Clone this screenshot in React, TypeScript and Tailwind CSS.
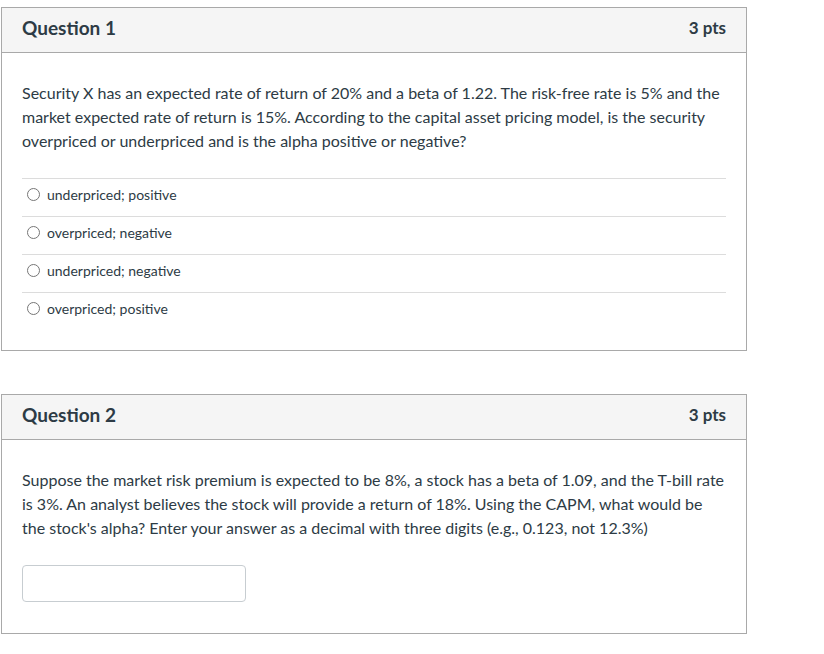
import React from 'react'

const options = [
  'underpriced; positive',
  'overpriced; negative',
  'underpriced; negative',
  'overpriced; positive',
]

const QuestionHeader = ({ title, pts }: { title: string; pts: string }) => (
  <div className="flex h-[45px] items-center justify-between border-b border-[#a9a9a9] bg-[#f5f5f5] px-5 pb-1">
    <span className="text-[19px] font-bold text-[#2d3b45]">{title}</span>
    <span className="text-[17px] font-bold text-[#2d3b45]">{pts}</span>
  </div>
)

export default function App() {
  return (
    <div
      className="min-h-screen bg-white pl-px pt-[7px] text-[#2d3b45]"
      style={{ fontFamily: 'Lato, "Noto Sans", sans-serif' }}
    >
      <div className="w-[746px] border border-[#a9a9a9]">
        <QuestionHeader title="Question 1" pts="3 pts" />
        <div className="px-5 pb-5 pt-[28px]">
          <p className="text-[16px] leading-[24px]">
            Security X has an expected rate of return of 20% and a beta of 1.22. The risk-free rate is 5% and the
            market expected rate of return is 15%. According to the capital asset pricing model, is the security
            overpriced or underpriced and is the alpha positive or negative?
          </p>
          <div className="mt-[25px]">
            {options.map((o) => (
              <label key={o} className="flex h-[38px] items-center border-t border-[#dcdcdc] pb-[7px]">
                <span className="ml-[5px] mr-[7px] h-[13px] w-[13px] rounded-full border border-[#767676] bg-white" />
                <span className="text-[14px]">{o}</span>
              </label>
            ))}
          </div>
        </div>
      </div>

      <div className="mt-[43px] w-[746px] border border-[#a9a9a9]">
        <QuestionHeader title="Question 2" pts="3 pts" />
        <div className="px-5 pb-[31px] pt-[28px]">
          <p className="text-[16px] leading-[24px]">
            Suppose the market risk premium is expected to be 8%, a stock has a beta of 1.09, and the T-bill rate
            is 3%. An analyst believes the stock will provide a return of 18%. Using the CAPM, what would be
            the stock's alpha? Enter your answer as a decimal with three digits (e.g., 0.123, not 12.3%)
          </p>
          <input
            type="text"
            className="mt-[25px] block h-[37px] w-[224px] rounded-[4px] border border-[#c7cdd1] bg-white px-2 outline-none"
          />
        </div>
      </div>
    </div>
  )
}
